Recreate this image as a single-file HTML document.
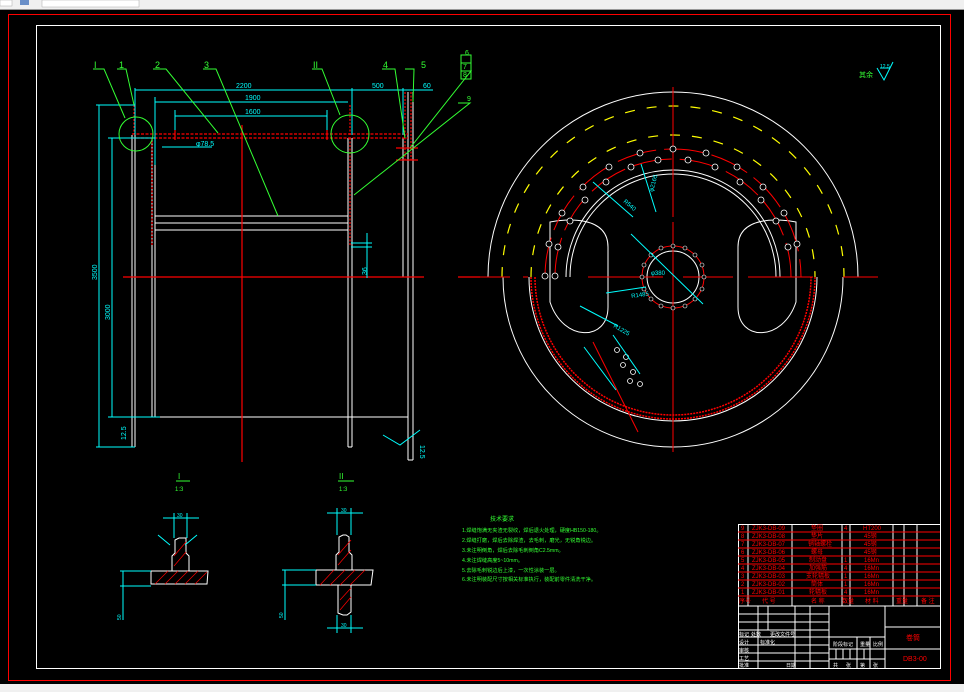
<!DOCTYPE html>
<html><head><meta charset="utf-8"><style>
html,body{margin:0;padding:0;background:#000;width:964px;height:692px;overflow:hidden}
svg{display:block}
text{font-family:"Liberation Sans","Noto Sans CJK SC",sans-serif}
</style></head><body>
<svg width="964" height="692" viewBox="0 0 964 692" xmlns="http://www.w3.org/2000/svg">
<rect x="0" y="0" width="964" height="692" fill="#000"/>
<!-- top toolbar -->
<rect x="0" y="0" width="964" height="10" fill="#f0f0f0"/>
<rect x="0" y="0" width="12" height="6" fill="#fff" stroke="#aaa" stroke-width="0.5"/>
<rect x="20" y="0" width="9" height="5" fill="#6a8fc8"/>
<rect x="42" y="0" width="97" height="7" fill="#fff" stroke="#aaa" stroke-width="0.5"/>
<rect x="0" y="9" width="964" height="1" fill="#999"/>
<rect x="0" y="684" width="964" height="8" fill="#f0f0f0"/>
<!-- frames -->
<rect x="8.5" y="14.5" width="942" height="666" fill="none" stroke="#f00" stroke-width="1"/>
<rect x="36.5" y="25.5" width="904" height="643" fill="none" stroke="#fff" stroke-width="1"/>

<!-- ===== LEFT VIEW ===== -->
<g stroke="#fff" stroke-width="1" fill="none">
<path d="M132 135V447M135 135V447M152 138V417M155 138V417M348 138V447M352 138V447M408 92V460M413 92V460M403 138V277M108 417H408M155 216H348M155 223H348M155 230H348M132 447H135M348 447H352M408 460H413"/>
</g>
<g stroke="#f00" stroke-width="1.2" fill="none">
<path d="M132 134H408M132 138H408" stroke-dasharray="3,1.5"/>
<path d="M134 105V134M152 138V245M350 105V135M350 138V245M405 92V160M411 92V160" stroke-dasharray="2,1.5"/>
<path d="M123 277H424M458 277H480M242 125V462"/>
<path d="M175 130V140M327 130V140M396 148H418M396 160H418"/>
</g>
<g stroke="#0ff" stroke-width="1" fill="none">
<path d="M135 90H352M155 102H348M175 116H327M352 90H433M155 97V165M135 88V135M352 88V135M403 88V135M175 110V130M327 110V130M99 105V447M112 138V417M96 105H135M96 447H135M108 138H155M108 417H160M162 147H212M367 233V278M351 243H372M351 247H372M383 435L400 445L420 430"/>
</g>
<g fill="#0ff" font-size="7">
<text x="236" y="88">2200</text><text x="245" y="100">1900</text><text x="245" y="114">1600</text>
<text x="372" y="88">500</text><text x="423" y="88">60</text><text x="196" y="146">φ78.5</text>
<text transform="translate(97,280) rotate(-90)">3500</text><text transform="translate(110,320) rotate(-90)">3000</text>
<text transform="translate(367,275) rotate(-90)">36</text>
<text transform="translate(126,440) rotate(-90)">12.5</text>
<text transform="translate(420,445) rotate(90)">12.5</text>
</g>
<g stroke="#3f3" stroke-width="1" fill="none">
<circle cx="136" cy="134" r="17"/><circle cx="350" cy="134" r="19"/>
<path d="M93 69H104L125 118M117 69H126L134 105M153 69H166L218 133M203 69H216L278 216M312 69H322L340 115M382 69H395L405 138M405 69H414L413 102M461 55H471V79H461ZM461 63H471M461 71H471L410 148M458 103H470L354 195"/>
</g>
<g fill="#3f3" font-size="9" font-family="Liberation Serif">
<text x="94" y="68">I</text><text x="119" y="68">1</text><text x="155" y="68">2</text><text x="204" y="68">3</text>
<text x="313" y="68">II</text><text x="383" y="68">4</text><text x="421" y="68">5</text><text x="465" y="55" font-size="7">6</text>
<text x="463" y="69" font-size="7">7</text><text x="463" y="77" font-size="7">8</text><text x="467" y="101" font-size="7">9</text>
</g>

<!-- ===== WHEEL VIEW ===== -->
<g transform="translate(673,277)">
<g stroke="#fff" stroke-width="1" fill="none">
<path d="M-185 0A185 185 0 0 1 185 0"/>
<path d="M-170 0A170 170 0 0 0 170 0"/>
<path d="M-107 0A107 107 0 0 1 107 0M-103 0A103 103 0 0 1 103 0"/>
<path d="M-144 0A144 144 0 0 0 144 0"/>
<circle r="26"/>
<path d="M-123 -55C-108 -58 -65 -62 -65 -30V30C-65 65 -110 65 -123 25V-20C-123 -40 -123 -50 -123 -55Z"/>
<path d="M123 -55C108 -58 65 -62 65 -30V30C65 65 110 65 123 25V-20C123 -40 123 -50 123 -55Z"/>
</g>
<g stroke="#ff0" stroke-width="1.2" fill="none" stroke-dasharray="10,12">
<path d="M-171 0A171 171 0 0 1 171 0"/>
<path d="M-142 0A142 142 0 0 1 142 0"/>
</g>
<g stroke="#f00" stroke-width="1" fill="none">
<path d="M-138 0A138 138 0 0 0 138 0M-142 0A142 142 0 0 0 142 0" stroke-width="1.5" stroke-dasharray="2,1"/>
<path d="M-128 0A128 128 0 0 1 128 0M-118 0A118 118 0 0 1 118 0" stroke-dasharray="40,8"/>
<circle r="31"/>
<path d="M-215 0H-163M-150 0H-145M-85 0H-10M10 0H60M75 0H140M170 0H205M0 -190V-60M0 -55V175"/>
<path d="M-80 65L-35 155"/>
</g>
<g stroke="#fff" stroke-width="0.8" fill="#000">
<circle cx="0" cy="-128" r="3"/><circle cx="-33" cy="-124" r="3"/><circle cx="33" cy="-124" r="3"/>
<circle cx="-15" cy="-117" r="3"/><circle cx="15" cy="-117" r="3"/><circle cx="-42" cy="-110" r="3"/><circle cx="42" cy="-110" r="3"/>
<circle cx="-64" cy="-110" r="3"/><circle cx="64" cy="-110" r="3"/><circle cx="-67" cy="-95" r="3"/><circle cx="67" cy="-95" r="3"/>
<circle cx="-90" cy="-90" r="3"/><circle cx="90" cy="-90" r="3"/><circle cx="-88" cy="-77" r="3"/><circle cx="88" cy="-77" r="3"/>
<circle cx="-111" cy="-64" r="3"/><circle cx="111" cy="-64" r="3"/><circle cx="-103" cy="-56" r="3"/><circle cx="103" cy="-56" r="3"/>
<circle cx="-124" cy="-33" r="3"/><circle cx="124" cy="-33" r="3"/><circle cx="-115" cy="-30" r="3"/><circle cx="115" cy="-30" r="3"/>
<circle cx="-128" cy="-1" r="3"/><circle cx="-118" cy="-1" r="3"/>
<circle cx="-56" cy="73" r="2.5"/><circle cx="-47" cy="80" r="2.5"/><circle cx="-50" cy="88" r="2.5"/><circle cx="-40" cy="95" r="2.5"/><circle cx="-43" cy="104" r="2.5"/><circle cx="-33" cy="107" r="2.5"/>
</g>
<g stroke="#fff" stroke-width="0.6" fill="#000">
<circle cx="0" cy="-31" r="2"/><circle cx="12" cy="-29" r="2"/><circle cx="22" cy="-22" r="2"/><circle cx="29" cy="-12" r="2"/>
<circle cx="31" cy="0" r="2"/><circle cx="29" cy="12" r="2"/><circle cx="22" cy="22" r="2"/><circle cx="12" cy="29" r="2"/>
<circle cx="0" cy="31" r="2"/><circle cx="-12" cy="29" r="2"/><circle cx="-22" cy="22" r="2"/><circle cx="-29" cy="12" r="2"/>
<circle cx="-31" cy="0" r="2"/><circle cx="-29" cy="-12" r="2"/><circle cx="-22" cy="-22" r="2"/><circle cx="-12" cy="-29" r="2"/>
</g>
<g stroke="#0ff" stroke-width="1" fill="none">
<path d="M-80 -95L-40 -60M-32 -113L-17 -65M-42 -43L30 27M-67 16L-27 10M-93 29L-55 49M-89 70L-57 113M-60 58L-33 97"/>
</g>
<g fill="#0ff" font-size="6">
<text transform="translate(-50,-75) rotate(40)">R540</text>
<text transform="translate(-20,-85) rotate(-75)">φ2165</text>
<text x="-22" y="-2">φ380</text><text x="-44" y="15" transform="rotate(-8)">R1485</text>
<text transform="translate(-60,50) rotate(30)">R1225</text>
</g>
</g>
<text x="859" y="77" fill="#3f3" font-size="7">其余</text>
<path d="M880 68H890L884 80L877 68M884 80L893 62" stroke="#0ff" fill="none"/>
<text x="880" y="68" fill="#0ff" font-size="5">12.5</text>

<!-- ===== DETAILS ===== -->
<g fill="#3f3" font-size="8" font-family="Liberation Serif">
<text x="178" y="479">I</text><text x="175" y="491" font-size="6">1:3</text>
<text x="339" y="479">II</text><text x="339" y="491" font-size="6">1:3</text>
</g>
<path d="M176 481H190M338 481H354" stroke="#3f3"/>
<g stroke="#fff" stroke-width="1" fill="#000">
<path d="M151 571H208L207 584H151Z"/>
<path d="M172 571V556L175 553V540L179 538H182L186 538V553L189 556V571Z"/>
<path d="M316 570H373L371 585H316Z"/>
<path d="M336 570V555L339 552V537L343 535H346L349 537V552L352 555V570Z"/>
<path d="M338 585H351V612L347 615H343L338 613Z"/>
</g>
<g stroke="#f00" stroke-width="0.7">
<path d="M155 584L168 571M165 584L178 571M175 584L188 571M185 584L198 571M195 584L207 572M174 566L186 552M174 556L186 542M320 585L334 570M330 585L345 570M340 585L355 570M350 585L365 570M338 565L351 550M338 555L351 540M340 610L351 597M340 600L351 588"/>
</g>
<g stroke="#0ff" stroke-width="1" fill="none">
<path d="M163 518H199M174 513V538M187 513V538M120 571H151M120 586H151M123 571V620M158 535L170 545M197 535L185 545M327 513H363M337 508V535M351 508V535M282 570H316M282 585H316M285 570V620M327 628H363M337 615V633M351 615V633"/>
</g>
<g fill="#0ff" font-size="5">
<text x="177" y="517">30</text><text x="341" y="512">30</text><text x="341" y="627">30</text>
<text transform="translate(121,620) rotate(-90)">50</text><text transform="translate(283,618) rotate(-90)">50</text>
</g>

<!-- ===== TECH REQUIREMENTS ===== -->
<g fill="#3f3" font-size="5.2" font-family="Liberation Sans,Noto Sans CJK SC,sans-serif">
<text x="490" y="521" font-size="6">技术要求</text>
<text x="462" y="532">1.焊缝饱满无夹渣无裂纹，焊后退火处理，硬度HB150-180。</text>
<text x="462" y="542">2.焊缝打磨，焊后去除焊渣，去毛刺，磨光，无锐角锐边。</text>
<text x="462" y="552">3.未注明倒角，焊后去除毛刺倒角C2.5mm。</text>
<text x="462" y="562">4.未注焊缝高度5~10mm。</text>
<text x="462" y="572">5.去除毛刺锐边后上漆，一次性涂装一层。</text>
<text x="462" y="581">6.未注明装配尺寸按相关标准执行，装配前零件清洗干净。</text>
</g>

<!-- ===== TITLE BLOCK ===== -->
<g stroke="#fff" stroke-width="1" fill="none">
<rect x="738.5" y="524.5" width="202" height="144"/>
<path d="M748 524V606M792 524V606M842 524V606M850 524V606M893 524V606M904 524V606M917 524V606M738 606H940"/>
<path d="M829 606V669M885 606V669M738 614H829M738 622H829M738 630H829M738 637H829M738 645H829M738 653H829M738 661H829M885 627H940M885 649H940M829 637H885M829 649H885M829 659H885"/>
<path d="M758 606V669M768 606V630M795 606V669M810 606V669M857 637V669M870 637V669M843 649V659M850 649V659M836 649V659M864 649V659"/>
<path d="M0 669H738" stroke-width="0"/>
</g>
<g stroke="#f00" stroke-width="1">
<path d="M738 532H940M738 540H940M738 548H940M738 556H940M738 564H940M738 572H940M738 580H940M738 588H940M738 596H940"/>
</g>
<g fill="#f00" font-size="6" font-family="Liberation Sans,Noto Sans CJK SC,sans-serif">
<text x="741" y="530">9</text><text x="752" y="530">ZJK3-DB-09</text><text x="811" y="530">垫圈</text><text x="844" y="530">4</text><text x="863" y="530">HT200</text>
<text x="741" y="538">8</text><text x="752" y="538">ZJK3-DB-08</text><text x="811" y="538">垫片</text><text x="864" y="538">45钢</text>
<text x="741" y="546">7</text><text x="752" y="546">ZJK3-DB-07</text><text x="808" y="546">销轴螺栓</text><text x="864" y="546">45钢</text>
<text x="741" y="554">6</text><text x="752" y="554">ZJK3-DB-06</text><text x="811" y="554">螺母</text><text x="864" y="554">45钢</text>
<text x="741" y="562">5</text><text x="752" y="562">ZJK3-DB-05</text><text x="809" y="562">制动盘</text><text x="844" y="562">1</text><text x="864" y="562">16Mn</text>
<text x="741" y="570">4</text><text x="752" y="570">ZJK3-DB-04</text><text x="809" y="570">加强筋</text><text x="844" y="570">4</text><text x="864" y="570">16Mn</text>
<text x="741" y="578">3</text><text x="752" y="578">ZJK3-DB-03</text><text x="806" y="578">支轮辐板</text><text x="844" y="578">1</text><text x="864" y="578">16Mn</text>
<text x="741" y="586">2</text><text x="752" y="586">ZJK3-DB-02</text><text x="811" y="586">筒体</text><text x="844" y="586">1</text><text x="864" y="586">16Mn</text>
<text x="741" y="594">1</text><text x="752" y="594">ZJK3-DB-01</text><text x="809" y="594">轮辐板</text><text x="844" y="594">4</text><text x="864" y="594">16Mn</text>
<text x="739" y="603">序号</text><text x="762" y="603">代 号</text><text x="811" y="603">名 称</text><text x="842" y="603">数量</text><text x="865" y="603">材 料</text><text x="896" y="603">重量</text><text x="921" y="603">备 注</text>
<text x="906" y="640" font-size="7">卷筒</text><text x="903" y="661" font-size="7">DB3-00</text>
</g>
<g fill="#fff" font-size="5" font-family="Liberation Sans,Noto Sans CJK SC,sans-serif">
<text x="739" y="636">标记</text><text x="751" y="636">处数</text><text x="770" y="636">更改文件号</text>
<text x="739" y="644">设计</text><text x="760" y="644">标准化</text><text x="739" y="652">审核</text><text x="739" y="660">工艺</text><text x="739" y="667">批准</text>
<text x="786" y="667">日期</text><text x="833" y="646">阶段标记</text><text x="860" y="646">重量</text><text x="873" y="646">比例</text>
<text x="833" y="667">共</text><text x="846" y="667">张</text><text x="860" y="667">第</text><text x="873" y="667">张</text>
</g>
</svg>
</body></html>
